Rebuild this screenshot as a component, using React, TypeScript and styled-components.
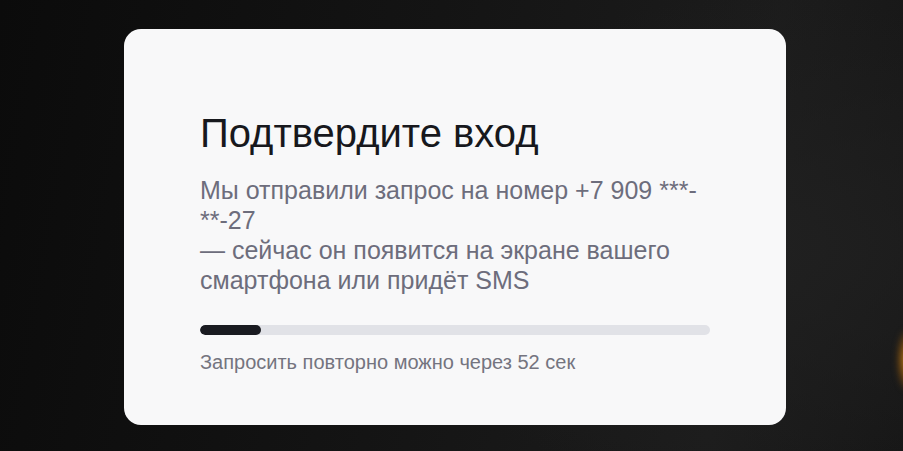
import styled, { createGlobalStyle } from "styled-components";

const GlobalStyle = createGlobalStyle`
  html, body {
    margin: 0;
    padding: 0;
    height: 100%;
  }

  body {
    font-family: "Liberation Sans", Arial, sans-serif;
    background: #111;
  }

  #root {
    height: 100%;
  }
`;

const secondsLeft = 52;
const totalSeconds = 59;

const App = () => {
  const progress = ((totalSeconds - secondsLeft) / totalSeconds) * 100;

  return (
    <>
      <GlobalStyle />
      <Page>
        <Glow />
        <Card>
          <Title>Подтвердите вход</Title>
          <Description>
            Мы отправили запрос на номер +7 909 ***-**-27
            <br />— сейчас он появится на экране вашего смартфона или придёт SMS
          </Description>
          <Progress>
            <ProgressFill style={{ width: `${progress}%` }} />
          </Progress>
          <Hint>Запросить повторно можно через {secondsLeft} сек</Hint>
        </Card>
      </Page>
    </>
  );
};

const Page = styled.div`
  position: relative;
  overflow: hidden;

  height: 451px;
  box-sizing: border-box;
  padding: 29px 0 0 124px;

  background:
    radial-gradient(ellipse 60% 80% at 85% 55%, #202020 0%, rgba(32, 32, 32, 0) 70%),
    linear-gradient(100deg, #0b0b0b 0%, #141414 45%, #1c1c1c 80%, #161616 100%);
`;

const Glow = styled.div`
  position: absolute;
  top: 330px;
  right: -14px;

  width: 20px;
  height: 60px;

  border-radius: 50%;
  background: radial-gradient(ellipse at center, #c98a1e 0%, #6b4310 45%, rgba(40, 30, 10, 0) 80%);
  filter: blur(3px);
`;

const Card = styled.div`
  position: relative;

  width: 662px;
  height: 396px;
  box-sizing: border-box;
  padding: 80px 76px 0;

  border-radius: 17px;
  background: #f8f8f9;
`;

const Title = styled.h1`
  margin: 0;

  font-size: 40px;
  font-weight: 400;
  line-height: 48px;
  color: #17181d;
`;

const Description = styled.p`
  margin: 18px 0 0;

  font-size: 25px;
  line-height: 30px;
  color: #6d6d7c;
`;

const Progress = styled.div`
  width: 100%;
  height: 10px;
  margin-top: 30px;

  border-radius: 5px;
  background: #e1e2e7;
  overflow: hidden;
`;

const ProgressFill = styled.div`
  height: 100%;

  border-radius: 5px;
  background: #1a1b21;
`;

const Hint = styled.div`
  margin-top: 15px;

  font-size: 20px;
  line-height: 24px;
  color: #74747f;
`;

export default App;
